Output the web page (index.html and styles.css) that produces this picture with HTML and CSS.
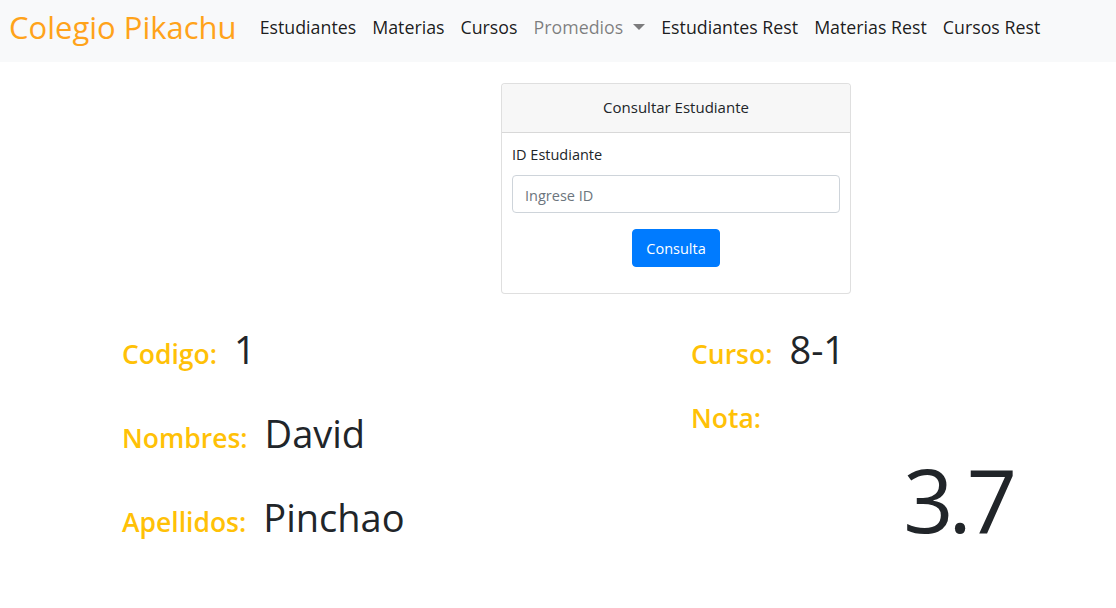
FILE: index.html
```html
<!DOCTYPE html>
<html lang="es">
<head>
<meta charset="utf-8">
<title>Colegio Pikachu</title>
<link rel="stylesheet" href="styles.css">
</head>
<body>
<nav class="navbar">
  <a class="brand" href="#">Colegio Pikachu</a>
  <ul class="nav">
    <li><a class="nav-link" href="#">Estudiantes</a></li>
    <li><a class="nav-link" href="#">Materias</a></li>
    <li><a class="nav-link" href="#">Cursos</a></li>
    <li><a class="nav-link muted" href="#">Promedios<span class="caret"></span></a></li>
    <li><a class="nav-link" href="#">Estudiantes Rest</a></li>
    <li><a class="nav-link" href="#">Materias Rest</a></li>
    <li><a class="nav-link" href="#">Cursos Rest</a></li>
  </ul>
</nav>

<main class="main">
  <section class="card-row">
    <div class="card">
      <div class="card-header">Consultar Estudiante</div>
      <form class="card-body">
        <label class="form-label" for="id-est">ID Estudiante</label>
        <input class="form-control" id="id-est" type="text" placeholder="Ingrese ID">
        <div class="btn-row"><button class="btn" type="button">Consulta</button></div>
      </form>
    </div>
  </section>

  <section class="result">
    <div class="col-left">
      <div class="field"><span class="label">Codigo:</span><span class="value">1</span></div>
      <div class="field"><span class="label">Nombres:</span><span class="value">David</span></div>
      <div class="field"><span class="label">Apellidos:</span><span class="value">Pinchao</span></div>
    </div>
    <div class="col-right">
      <div class="field"><span class="label">Curso:</span><span class="value">8-1</span></div>
      <div class="field nota"><span class="label">Nota:</span></div>
      <div class="grade">3.7</div>
    </div>
  </section>
</main>
</body>
</html>
```

FILE: styles.css
```css
* { box-sizing: border-box; }
html, body { margin: 0; padding: 0; }
body {
  font-family: "Open Sans", "Noto Sans", sans-serif;
  font-size: 15px;
  line-height: 1.5;
  color: #212529;
  background: #fff;
}
a { text-decoration: none; }

.navbar {
  display: flex;
  align-items: center;
  height: 62px;
  padding: 0 8px 8px;
  background: #f8f9fa;
}
.brand {
  font-size: 31px;
  line-height: 40px;
  color: #ffa31a;
  margin-left: 1px;
  margin-right: 15px;
  white-space: nowrap;
}
.nav {
  display: flex;
  list-style: none;
  margin: 0;
  padding: 0;
}
.nav-link {
  display: flex;
  align-items: center;
  padding: 8px 8px;
  font-size: 17.8px;
  color: rgba(0,0,0,.9);
  white-space: nowrap;
}
.nav-link.muted { color: rgba(0,0,0,.5); }
.caret {
  display: inline-block;
  margin-left: 10px;
  width: 0; height: 0;
  border-top: 6px solid rgba(0,0,0,.5);
  border-left: 6px solid transparent;
  border-right: 6px solid transparent;
}

.main { padding-top: 21px; }
.card-row { display: flex; padding-left: 501px; }
.card {
  width: 350px;
  border: 1px solid rgba(0,0,0,.125);
  border-radius: 4px;
  background: #fff;
}
.card-header {
  padding: 12px 20px 12px;
  height: 49px;
  text-align: center;
  background: #f7f7f7;
  border-bottom: 1px solid rgba(0,0,0,.125);
  border-radius: 4px 4px 0 0;
  font-size: 15px;
}
.card-body {
  display: flex;
  flex-direction: column;
  padding: 10px 10px 26px;
  margin: 0;
}
.form-label { display: block; margin-bottom: 8px; font-size: 14.5px; line-height: 24px; }
.form-control {
  height: 38px;
  padding: 7px 12px 5px;
  font: inherit;
  font-size: 14.5px;
  border: 1px solid #ced4da;
  border-radius: 4px;
  color: #495057;
}
.form-control::placeholder { color: #6c757d; }
.btn-row { display: flex; justify-content: center; margin-top: 16px; }
.btn {
  height: 38px;
  padding: 7px 13px 5px;
  font: inherit;
  font-size: 14.5px;
  color: #fff;
  background: #007bff;
  border: 1px solid #007bff;
  border-radius: 4px;
}

.result {
  display: flex;
  padding-top: 27px;
}
.col-left { width: 691px; padding-left: 122px; }
.col-right { width: 326px; }
.field {
  display: flex;
  align-items: baseline;
  height: 84px;
}
.label {
  font-size: 26.5px;
  font-weight: 600;
  color: #ffc107;
  margin-right: 17px;
}
.value {
  font-size: 38px;
  font-weight: 400;
  color: #212529;
}
.field.nota { height: 40px; margin-top: -6px; }
.grade {
  text-align: right;
  font-size: 88px;
  line-height: 1;
  letter-spacing: -5px;
  padding-right: 5px;
  margin-top: 16px;
  color: #212529;
}
```
